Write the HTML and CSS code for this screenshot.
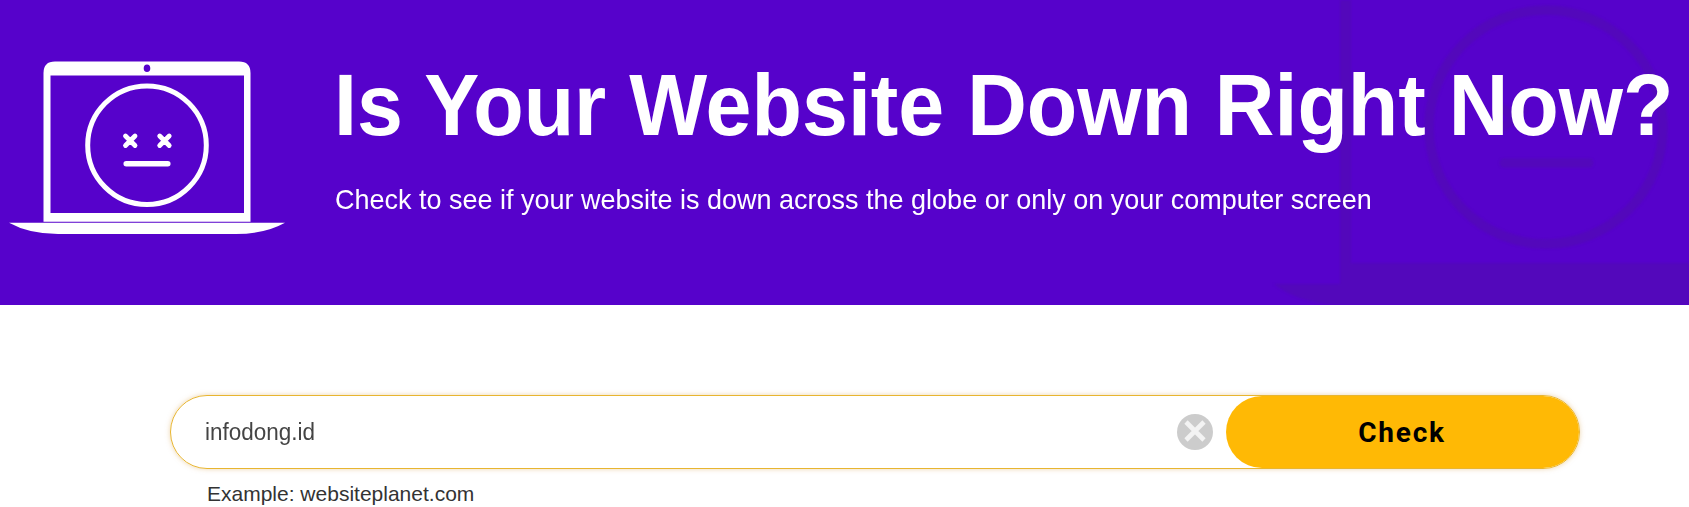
FILE: index.html
```html
<!DOCTYPE html>
<html lang="en">
<head>
<meta charset="utf-8">
<title>Is Your Website Down Right Now?</title>
<link rel="stylesheet" href="styles.css">
</head>
<body>
<header class="banner">
  <svg class="watermark" viewBox="0 0 419 305" aria-hidden="true">
    <path fill="currentColor" d="M70 0H81V263H419V305H64Q25 301 4 284H70Z"/>
    <circle cx="276" cy="127" r="117" fill="none" stroke="currentColor" stroke-width="9.500"/>
    <path fill="none" stroke="currentColor" stroke-width="9" stroke-linecap="round" d="M234 163H319M234 109L252 127M252 109L234 127M301 109L319 127M319 109L301 127"/>
  </svg>
  <svg class="laptop" viewBox="0 0 276 176" aria-hidden="true">
    <path fill="currentColor" fill-rule="evenodd" d="M34.500 162.700V14Q34.500 2.500 46 2.500H230Q241.500 2.500 241.500 14V162.700ZM41.500 16.500V154H235V16.500ZM138 5.500A3.300 3.800 0 1 0 138 13.100A3.300 3.800 0 1 0 138 5.500Z"/>
    <path fill="currentColor" d="M0 163.800H276Q256 175 227 175H49Q20 175 0 163.800Z"/>
    <circle cx="138" cy="86.200" r="59.300" fill="none" stroke="currentColor" stroke-width="5"/>
    <path fill="none" stroke="currentColor" stroke-width="4.800" stroke-linecap="round" d="M116.500 77L126 86.500M126 77L116.500 86.500M150.700 77L160.200 86.500M160.200 77L150.700 86.500"/>
    <path fill="none" stroke="currentColor" stroke-width="5.500" stroke-linecap="round" d="M117.200 104.700H158.800"/>
  </svg>
  <div class="intro">
    <h1 class="title">Is Your Website Down Right Now?</h1>
    <p class="subtitle">Check to see if your website is down across the globe or only on your computer screen</p>
  </div>
</header>
<main class="checker">
  <form class="field">
    <span class="value">infodong.id</span>
    <svg class="clear" viewBox="0 0 36 36" role="img" aria-label="Clear"><circle cx="18" cy="18" r="18" fill="#ccc"/><path d="M9 8L27 26M27 8L9 26" stroke="#f3f3f3" stroke-width="4.600"/></svg>
    <button class="check" type="button">Check</button>
  </form>
  <p class="example">Example: websiteplanet.com</p>
</main>
</body>
</html>
```
FILE: styles.css
```css
* { box-sizing: border-box; }
body { margin: 0; background: #fff; font-family: "Liberation Sans", Arial, sans-serif; overflow: hidden; }
.banner { position: relative; display: flex; height: 305px; padding: 59px 0 0 9px; overflow: hidden; background: #5602cb; color: #fff; }
.watermark { position: absolute; left: 1270px; top: 0; width: 419px; height: 305px; color: #5308bb; filter: blur(1px); }
.laptop { position: relative; flex: none; width: 276px; height: 176px; }
.intro { position: relative; flex: none; width: 1340px; margin-left: 49px; white-space: nowrap; }
.title { width: max-content; margin: 0; font-size: 87px; line-height: 92px; font-weight: 700; transform: scaleX(.949); transform-origin: left; }
.subtitle { width: max-content; margin: 33px 0 0 1px; font-size: 28px; line-height: 32px; transform: scaleX(.964); transform-origin: left; }
.checker { padding: 90px 109px 0 170px; }
.field { display: flex; align-items: center; height: 74px; padding-left: 34px; border: 1px solid #e8b530; border-radius: 37px; box-shadow: 0 0 5px rgba(220, 170, 90, .5); }
.value { margin-right: auto; color: #444; font-size: 23.5px; transform: scaleX(.957); transform-origin: left; }
.clear { width: 36px; height: 36px; margin-right: 13px; }
.check { width: 353px; height: 72px; padding: 0 1px 0 0; border: 0; border-radius: 36px; background: #ffb905; color: #000; font: 700 28px Roboto, sans-serif; letter-spacing: 1.8px; }
.example { margin: 13px 0 0 37px; color: #333; font-size: 21px; line-height: 24px; }
```
